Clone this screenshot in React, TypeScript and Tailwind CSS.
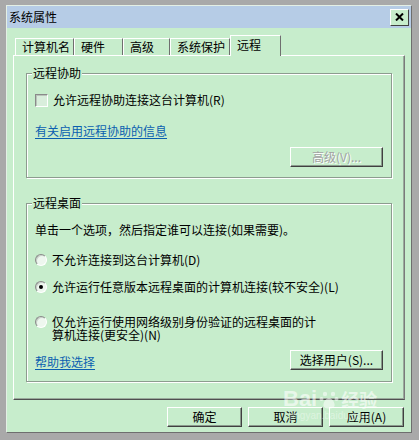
import React from "react";

const GREEN = "bg-[#c7edcc]";

/* classic 3D push button */
function Btn({
  children,
  className = "",
  disabled = false,
}: {
  children: React.ReactNode;
  className?: string;
  disabled?: boolean;
}) {
  return (
    <div
      className={`flex h-[20px] items-center justify-center border border-t-white border-l-white border-r-[#404040] border-b-[#404040] bg-[#c7edcc] shadow-[inset_-1px_-1px_0_#8a9a8c] ${
        disabled ? "text-[#a3a3a3] [text-shadow:1px_1px_0_#fff]" : "text-black"
      } ${className}`}
    >
      {children}
    </div>
  );
}

function Radio({ checked = false }: { checked?: boolean }) {
  return (
    <div className="flex h-[12px] w-[12px] shrink-0 items-center justify-center rounded-full border border-t-[#8a8a8a] border-l-[#8a8a8a] border-r-white border-b-white bg-[#eef7ef] shadow-[inset_1px_1px_0_#c9d2ca]">
      {checked && <div className="h-[4px] w-[4px] rounded-full bg-black" />}
    </div>
  );
}

function Tab({ label, className }: { label: string; className: string }) {
  return (
    <div
      className={`mb-px flex h-[17px] items-center border-t border-l border-r border-t-white border-l-white border-r-[#6f6f6f] pl-[6px] ${className}`}
    >
      {label}
    </div>
  );
}

export default function App() {
  return (
    <div className="relative h-[440px] w-[419px] bg-[#a9a9a9] pl-[6px] pt-[5px] font-['Noto_Sans_CJK_SC','Noto_Sans',sans-serif] text-[12px] leading-[14px] text-black">
      <div
        className={`flex h-[428px] w-[406px] flex-col border border-t-[#e4efe5] border-l-[#e4efe5] border-r-[#6e6e6e] border-b-[#6e6e6e] ${GREEN}`}
      >
        {/* title bar */}
        <div className="flex h-[22px] items-center justify-between bg-[#b6cce6] pl-[2px] pr-[2px]">
          <span>系统属性</span>
          <div className="flex h-[17px] w-[19px] items-center justify-center border border-t-white border-l-white border-r-[#404040] border-b-[#404040] bg-[#c7edcc]">
            <svg width="9" height="8" viewBox="0 0 9 8">
              <path d="M1 0.5 L8 7.5 M8 0.5 L1 7.5" stroke="#000" strokeWidth="2" />
            </svg>
          </div>
        </div>

        {/* tabs */}
        <div className="relative z-10 ml-[8px] mt-[7px] flex h-[21px] items-end">
          <Tab label="计算机名" className="w-[59px]" />
          <Tab label="硬件" className="w-[49px]" />
          <Tab label="高级" className="w-[47px]" />
          <Tab label="系统保护" className="w-[60px]" />
          <div className="flex h-[21px] w-[51px] items-center border-t border-l border-r border-t-white border-l-white border-r-[#6f6f6f] bg-[#c7edcc] pb-[2px] pl-[6px]">
            远程
          </div>
        </div>

        {/* tab panel */}
        <div className="-mt-px ml-[6px] h-[345px] w-[392px] border border-t-white border-l-white border-r-[#7a7a7a] border-b-[#505050] px-[12px] pt-[17px] shadow-[inset_-1px_-1px_0_#9aaa9c]">
          {/* 远程协助 */}
          <div className="h-[105px] border border-[#8d9c8f] pl-[8px] shadow-[1px_1px_0_#fff,inset_1px_1px_0_#fff]">
            <span className={`-ml-[3px] -mt-[8px] block w-fit px-px ${GREEN}`}>远程协助</span>
            <div className="mt-[13px] flex h-[14px] items-center gap-[5px]">
              <div className="h-[13px] w-[13px] border border-t-[#8a8a8a] border-l-[#8a8a8a] border-r-white border-b-white bg-[#d9eedc] shadow-[inset_1px_1px_0_#b9c4ba]" />
              <span>允许远程协助连接这台计算机(R)</span>
            </div>
            <div className="mt-[17px] w-fit text-[#0a5fb0] underline underline-offset-2">
              有关启用远程协助的信息
            </div>
            <div className="mt-[9px] flex justify-end pr-[8px]">
              <Btn className="w-[93px]" disabled>
                高级(V)...
              </Btn>
            </div>
          </div>

          {/* 远程桌面 */}
          <div className="mt-[25px] h-[179px] border border-[#8d9c8f] pl-[8px] shadow-[1px_1px_0_#fff,inset_1px_1px_0_#fff]">
            <span className={`-ml-[3px] -mt-[8px] block w-fit px-px ${GREEN}`}>远程桌面</span>
            <div className="mt-[13px]">单击一个选项，然后指定谁可以连接(如果需要)。</div>
            <div className="mt-[16px] flex h-[14px] items-center gap-[5px]">
              <Radio />
              <span>不允许连接到这台计算机(D)</span>
            </div>
            <div className="mt-[13px] flex h-[14px] items-center gap-[5px]">
              <Radio checked />
              <span>允许运行任意版本远程桌面的计算机连接(较不安全)(L)</span>
            </div>
            <div className="mt-[21px] flex items-start gap-[5px]">
              <div className="mt-px">
                <Radio />
              </div>
              <span className="w-[300px] leading-[13px]">
                仅允许运行使用网络级别身份验证的远程桌面的计
                <br />
                算机连接(更安全)(N)
              </span>
            </div>
            <div className="mt-[9px] flex items-center justify-between pr-[8px]">
              <span className="mt-[3px] text-[#0a5fb0] underline underline-offset-2">帮助我选择</span>
              <Btn className="w-[93px]">选择用户(S)...</Btn>
            </div>
          </div>
        </div>

        {/* dialog buttons */}
        <div className="mt-[7px] flex justify-end gap-[6px] pr-[7px]">
          <Btn className="w-[75px]">确定</Btn>
          <Btn className="w-[75px]">取消</Btn>
          <Btn className="w-[75px]">应用(A)</Btn>
        </div>
      </div>

      {/* Baidu watermark */}
      <div className="pointer-events-none absolute left-[283px] top-[388px] flex flex-col items-center text-white/60">
        <div className="flex items-end gap-[2px] font-['Liberation_Sans',sans-serif] text-[22px] font-bold leading-[22px]">
          <span>Bai</span>
          <svg width="20" height="20" viewBox="0 0 20 20" className="opacity-90">
            <circle cx="6" cy="4" r="2.2" fill="currentColor" />
            <circle cx="14" cy="4" r="2.2" fill="currentColor" />
            <circle cx="2.5" cy="9" r="2" fill="currentColor" />
            <circle cx="17.5" cy="9" r="2" fill="currentColor" />
            <path d="M10 8 C6 8 3 15 5 17 C7 19 13 19 15 17 C17 15 14 8 10 8Z" fill="currentColor" />
          </svg>
          <span className="font-['Noto_Sans_CJK_SC',sans-serif] text-[18px]">经验</span>
        </div>
        <span className="font-['Liberation_Sans',sans-serif] text-[10px] leading-[12px] text-white/40">
          jingyan.baidu.com
        </span>
      </div>
    </div>
  );
}
